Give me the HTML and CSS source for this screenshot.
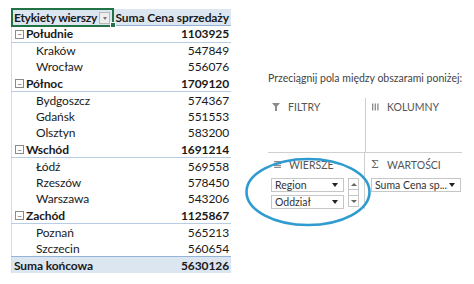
FILE: index.html
```html
<!DOCTYPE html>
<html lang="pl">
<head>
    <meta charset="UTF-8">
    <title>Tabela przestawna</title>
    <link rel="stylesheet" href="styles.css">
</head>
<body>
    <div id="sheet">
        <table class="pivot">
            <tr class="head">
                <td class="label selected">Etykiety wierszy<span class="dd"><span class="tri"></span></span><span class="handle"></span></td>
                <td class="value">Suma Cena sprzedaży</td>
            </tr>
            <tr class="group"><td class="label"><span class="box">−</span>Południe</td><td class="value">1103925</td></tr>
            <tr class="item"><td class="label">Kraków</td><td class="value">547849</td></tr>
            <tr class="item"><td class="label">Wrocław</td><td class="value">556076</td></tr>
            <tr class="group"><td class="label"><span class="box">−</span>Północ</td><td class="value">1709120</td></tr>
            <tr class="item"><td class="label">Bydgoszcz</td><td class="value">574367</td></tr>
            <tr class="item"><td class="label">Gdańsk</td><td class="value">551553</td></tr>
            <tr class="item"><td class="label">Olsztyn</td><td class="value">583200</td></tr>
            <tr class="group"><td class="label"><span class="box">−</span>Wschód</td><td class="value">1691214</td></tr>
            <tr class="item"><td class="label">Łódź</td><td class="value">569558</td></tr>
            <tr class="item"><td class="label">Rzeszów</td><td class="value">578450</td></tr>
            <tr class="item"><td class="label">Warszawa</td><td class="value">543206</td></tr>
            <tr class="group"><td class="label"><span class="box">−</span>Zachód</td><td class="value">1125867</td></tr>
            <tr class="item"><td class="label">Poznań</td><td class="value">565213</td></tr>
            <tr class="item"><td class="label">Szczecin</td><td class="value">560654</td></tr>
            <tr class="total"><td class="label">Suma końcowa</td><td class="value">5630126</td></tr>
        </table>
    </div>

    <div id="pane">
        <div class="hint">Przeciągnij pola między obszarami poniżej:</div>
        <div class="areas">
            <div class="area filters">
                <div class="area_head">
                    <svg class="ico" viewBox="0 0 8 8" width="8" height="8"><path d="M0 0h8L5 3.5V8H3V3.5z"/></svg>
                    FILTRY
                </div>
            </div>
            <div class="area columns">
                <div class="area_head">
                    <svg class="ico" viewBox="0 0 8 8" width="7" height="8"><path d="M0 0h1.5v8H0zM3 0h1.5v8H3zM6 0h1.5v8H6z"/></svg>
                    KOLUMNY
                </div>
            </div>
            <div class="area rows">
                <div class="area_head">
                    <svg class="ico" viewBox="0 0 8 8" width="7" height="7"><path d="M0 0h8v1.3H0zM0 2.2h8v1.3H0zM0 4.4h8v1.3H0zM0 6.6h8v1.3H0z"/></svg>
                    WIERSZE
                </div>
                <div class="fieldlist">
                    <div class="fields">
                        <div class="field">Region<span class="arrow"></span></div>
                        <div class="field">Oddział<span class="arrow"></span></div>
                    </div>
                    <div class="scroll">
                        <div class="sbtn up"></div>
                        <div class="strack"></div>
                        <div class="sbtn down"></div>
                    </div>
                </div>
            </div>
            <div class="area values">
                <div class="area_head">
                    <span class="sigma">Σ</span>
                    WARTOŚCI
                </div>
                <div class="field wide">Suma Cena sp...<span class="arrow"></span></div>
            </div>
        </div>
        <svg class="circle" width="140" height="80" viewBox="0 0 140 80">
            <ellipse cx="70" cy="40" rx="61.5" ry="33" fill="none" stroke="#2f9bd0" stroke-width="2.6"/>
        </svg>
    </div>
</body>
</html>
```

FILE: styles.css
```css
body, html{
    margin: 0;
    padding: 0;
    height: 100%;
    background: #ffffff;
}
body{
    display: flex;
    font-family: 'Lato', 'Liberation Sans', sans-serif;
    overflow: hidden;
}
#sheet{
    padding: 9px 0 0 11px;
    width: 220px;
}
.pivot{
    border-collapse: collapse;
    width: 220px;
    font-size: 12px;
    letter-spacing: -0.1px;
    color: #1a1a1a;
    border-left: 1px solid #d4dbe4;
}
.pivot td{
    height: 16.5px;
    padding: 0 2px;
    white-space: nowrap;
    box-sizing: border-box;
}
.pivot .label{
    width: 104px;
    position: relative;
}
.pivot .value{
    text-align: right;
}
.head td{
    background: #dce6f1;
    font-weight: bold;
    border-bottom: 1px solid #95b3d7;
}
.head .label{
    letter-spacing: -0.25px;
}
.head .selected{
    outline: 2px solid #217346;
    outline-offset: -1px;
}
.dd{
    position: absolute;
    right: 3px;
    top: 3px;
    width: 9px;
    height: 10px;
    background: #eeeeee;
    border: 1px solid #b8b8b8;
    display: flex;
    align-items: center;
    justify-content: center;
}
.tri{
    border-left: 2.5px solid transparent;
    border-right: 2.5px solid transparent;
    border-top: 3px solid #777;
}
.handle{
    position: absolute;
    right: -3px;
    bottom: -3px;
    width: 4px;
    height: 4px;
    background: #217346;
    border: 1px solid #fff;
}
.group td{
    font-weight: bold;
    border-bottom: 1px solid #b8cce4;
}
.box{
    display: inline-flex;
    align-items: center;
    justify-content: center;
    width: 7px;
    height: 7px;
    border: 1px solid #8a8a8a;
    font-size: 8px;
    line-height: 1;
    margin: 0 2px 0 1px;
    vertical-align: 1px;
    color: #444;
    font-weight: normal;
}
.item .label{
    padding-left: 24px;
}
.total td{
    font-weight: bold;
    background: #dce6f1;
    border-top: 1px solid #95b3d7;
}

#pane{
    position: relative;
    margin-left: 37px;
    padding-top: 72px;
    width: 196px;
    color: #555;
}
.hint{
    font-size: 10.5px;
    color: #444;
    white-space: nowrap;
    height: 23px;
}
.areas{
    display: grid;
    grid-template-columns: 97px 97px;
    grid-template-rows: 58px 56px;
}
.area{
    padding: 5px 0 0 4px;
}
.rows{
    border-right: 1px solid #cfcfcf;
}
.filters, .columns{
    border-bottom: 1px solid #cfcfcf;
}
.columns{
    border-left: 1px solid #cfcfcf;
    margin-top: 3px;
    padding-top: 2px;
}
.columns, .values{
    padding-left: 6px;
}
.rows{
    padding-left: 6px;
}
.area_head{
    display: flex;
    align-items: center;
    gap: 8px;
    font-size: 10.5px;
    color: #555;
    height: 13px;
}
.ico{
    fill: #8c8c8c;
}
.sigma{
    font-family: 'DejaVu Serif', serif;
    font-size: 11px;
    color: #666;
    width: 8px;
}
.fieldlist{
    display: flex;
    gap: 4px;
    margin-top: 7px;
    margin-left: -3px;
}
.fields{
    display: flex;
    flex-direction: column;
    gap: 3px;
}
.field{
    display: flex;
    align-items: center;
    justify-content: space-between;
    width: 73px;
    height: 14px;
    box-sizing: border-box;
    border: 1px solid #c6c6c6;
    padding: 0 5px 0 3px;
    font-size: 10.5px;
    color: #333;
}
.field.wide{
    width: 90px;
    margin-top: 7px;
    margin-left: 0;
}
.arrow{
    border-left: 3px solid transparent;
    border-right: 3px solid transparent;
    border-top: 4px solid #222;
}
.scroll{
    display: flex;
    flex-direction: column;
    width: 11px;
}
.sbtn{
    height: 12px;
    box-sizing: border-box;
    border: 1px solid #c6c6c6;
    display: flex;
    align-items: center;
    justify-content: center;
}
.sbtn.up::after{
    content: "";
    border-left: 3px solid transparent;
    border-right: 3px solid transparent;
    border-bottom: 3px solid #666;
}
.sbtn.down::after{
    content: "";
    border-left: 3px solid transparent;
    border-right: 3px solid transparent;
    border-top: 3px solid #666;
}
.strack{
    height: 5px;
    border-left: 1px solid #c6c6c6;
    border-right: 1px solid #c6c6c6;
}
.circle{
    position: absolute;
    left: -30px;
    top: 152px;
}
```
